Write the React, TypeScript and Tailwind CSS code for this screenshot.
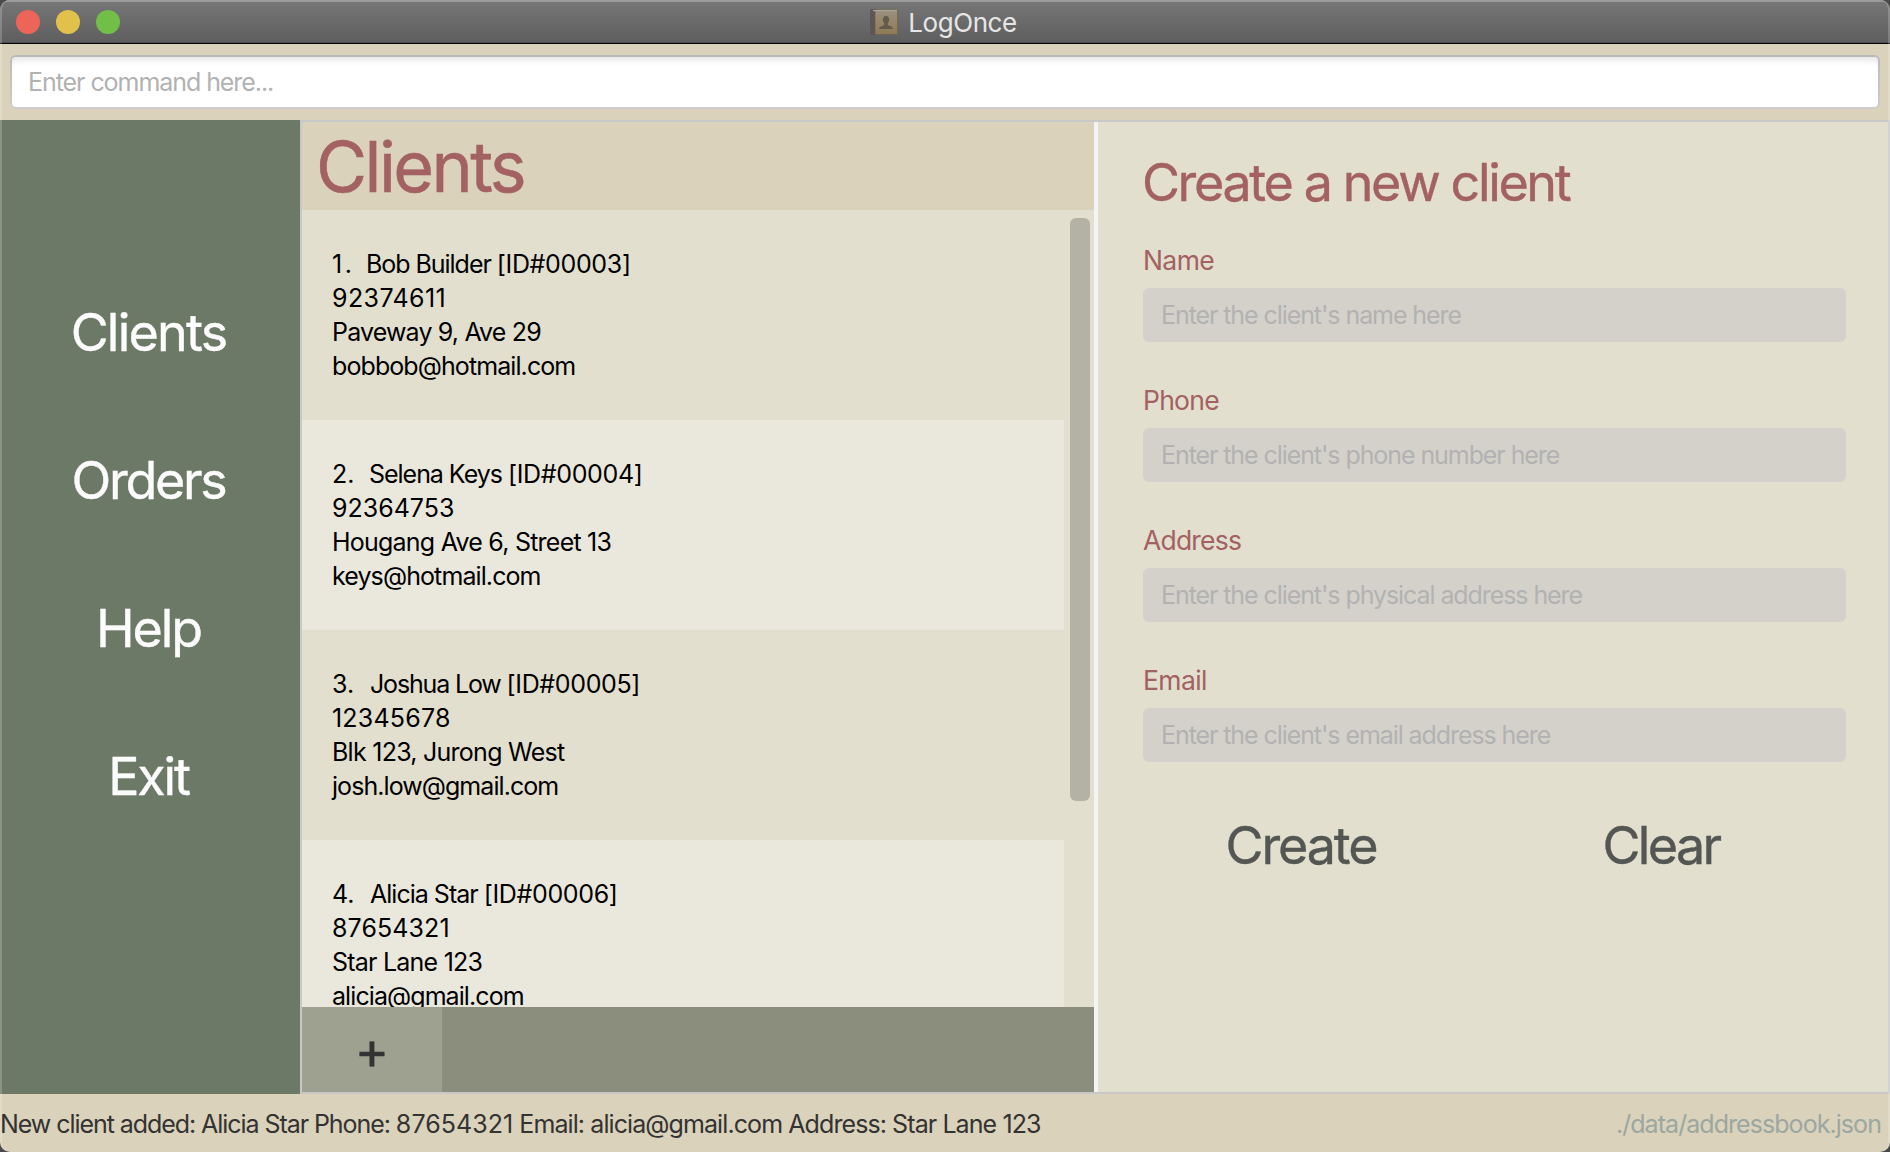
import React from "react";

type Client = {
  no: string;
  noClass: string;
  name: string;
  nameClass: string;
  id: string;
  lines: { text: string; className: string }[];
};

const clients: Client[] = [
  {
    no: "1.",
    noClass: "w-[34px] tracking-[2.5px]",
    name: "Bob Builder ",
    nameClass: "tracking-[-1.04px]",
    id: "[ID#00003]",
    lines: [
      { text: "92374611", className: "tracking-[0.4px]" },
      { text: "Paveway 9, Ave 29", className: "tracking-[-0.84px]" },
      { text: "bobbob@hotmail.com", className: "tracking-[-0.91px]" },
    ],
  },
  {
    no: "2.",
    noClass: "w-[37px]",
    name: "Selena Keys ",
    nameClass: "tracking-[-1.03px]",
    id: "[ID#00004]",
    lines: [
      { text: "92364753", className: "tracking-[0px]" },
      { text: "Hougang Ave 6, Street 13", className: "tracking-[-0.77px]" },
      { text: "keys@hotmail.com", className: "tracking-[-0.9px]" },
    ],
  },
  {
    no: "3.",
    noClass: "w-[38px]",
    name: "Joshua Low ",
    nameClass: "tracking-[-1.16px]",
    id: "[ID#00005]",
    lines: [
      { text: "12345678", className: "tracking-[0.2px]" },
      { text: "Blk 123, Jurong West", className: "tracking-[-0.74px]" },
      { text: "josh.low@gmail.com", className: "tracking-[-0.94px]" },
    ],
  },
  {
    no: "4.",
    noClass: "w-[38px]",
    name: "Alicia Star ",
    nameClass: "tracking-[-0.99px]",
    id: "[ID#00006]",
    lines: [
      { text: "87654321", className: "tracking-[0.1px]" },
      { text: "Star Lane 123", className: "tracking-[-0.77px]" },
      { text: "alicia@gmail.com", className: "tracking-[-0.92px]" },
    ],
  },
];

const nav = [
  { label: "Clients", className: "tracking-[-1.78px]" },
  { label: "Orders", className: "tracking-[-2.3px]" },
  { label: "Help", className: "tracking-[-2.1px]" },
  { label: "Exit", className: "tracking-[-2.2px]" },
];

const fields = [
  { label: "Name", hint: "Enter the client's name here", className: "tracking-[-0.6px]" },
  { label: "Phone", hint: "Enter the client's phone number here", className: "tracking-[-0.75px]" },
  { label: "Address", hint: "Enter the client's physical address here", className: "tracking-[-0.8px]" },
  { label: "Email", hint: "Enter the client's email address here", className: "tracking-[-0.6px]" },
];

function BookIcon() {
  return (
    <svg className="h-[26px] w-7" viewBox="0 0 28 26">
      <defs>
        <linearGradient id="cover" x1="0" y1="0" x2="0" y2="1">
          <stop offset="0" stopColor="#9a9080" />
          <stop offset="1" stopColor="#8f7a55" />
        </linearGradient>
      </defs>
      <rect x="0" y="0" width="7" height="26" rx="1.5" fill="#5d5656" />
      <rect x="5" y="0.5" width="23" height="25" rx="1" fill="#7a6a4c" />
      <rect x="5.5" y="1" width="21.5" height="24" fill="url(#cover)" />
      <rect x="3" y="1" width="24" height="1.2" fill="#aaa398" />
      <path
        d="M16 7c-2 0-3.200 1.500-3.200 3.500 0 1.500.6 2.700 1.400 3.600v1.600c-.8 1.300-5.200 1.500-5.200 4.300h14c0-2.800-4.400-3-5.200-4.300v-1.600c.8-.9 1.400-2.100 1.400-3.600C19.200 8.500 18 7 16 7Z"
        fill="#635a4c"
      />
    </svg>
  );
}

function TitleBar() {
  return (
    <header className="relative flex h-11 shrink-0 items-center justify-center border-b border-black bg-linear-to-b from-[#777777] to-[#5e5e5e] shadow-[inset_0_2px_0_#9b9b9b,inset_0_-1px_0_#505050]">
      <div className="absolute left-4 top-2.5 flex gap-4">
        <span className="size-6 rounded-full bg-[#ed6559]" />
        <span className="size-6 rounded-full bg-[#e1c04c]" />
        <span className="size-6 rounded-full bg-[#72bf47]" />
      </div>
      <div className="mb-px mr-[3px] mt-0.5 flex items-center gap-2.5">
        <BookIcon />
        <span className="pt-0.5 text-[26px] leading-8 tracking-[-0.45px] text-[#e6e6e6]">LogOnce</span>
      </div>
    </header>
  );
}

function Sidebar() {
  return (
    <nav className="flex w-[300px] shrink-0 flex-col items-center bg-[#6d7967] pr-[3px] pt-[139px]">
      {nav.map((n) => (
        <button
          key={n.label}
          className={"text-[52px] leading-[148px] text-[#fcfcfc] [-webkit-text-stroke:0.4px] " + n.className}
        >
          {n.label}
        </button>
      ))}
    </nav>
  );
}

function ClientList() {
  return (
    <section className="flex w-[792px] shrink-0 flex-col">
      <h1 className="h-[88px] shrink-0 bg-[#dad2ba] pl-3.5 pt-px text-[70px] leading-[88px] tracking-[-2.6px] text-[#a36161] [-webkit-text-stroke:0.5px]">
        Clients
      </h1>
      <div className="flex min-h-0 flex-1">
        <ul className="w-[762px] shrink-0 overflow-hidden">
          {clients.map((c) => (
            <li key={c.no} className="h-[210px] pl-[30px] pt-[37px] text-[25px] leading-[34px] text-black even:bg-[#eae8dd]">
              <div className="flex whitespace-pre">
                <span className={"shrink-0 " + c.noClass}>{c.no}</span>
                <span className={c.nameClass}>{c.name}</span>
                <span className="tracking-[-0.35px]">{c.id}</span>
              </div>
              {c.lines.map((line) => (
                <div key={line.text} className={"whitespace-nowrap " + line.className}>
                  {line.text}
                </div>
              ))}
            </li>
          ))}
        </ul>
        <div className="flex-1 pl-1.5 pt-2">
          <div className="h-[583px] w-5 rounded-[6px] bg-[#b4b2a5]" />
        </div>
      </div>
      <div className="flex h-[85px] shrink-0 bg-[#8b8e7d]">
        <button className="flex w-[140px] items-center justify-center bg-[#9ea190] pt-0.5 text-[52px] leading-none text-[#333333] [-webkit-text-stroke:0.4px]">
          +
        </button>
      </div>
    </section>
  );
}

function ClientForm() {
  return (
    <section className="min-w-0 flex-1 pl-[45px] pt-[29px]">
      <h2 className="ml-[-1px] whitespace-nowrap text-[52px] leading-[64px] tracking-[-2.36px] text-[#a36161] [-webkit-text-stroke:0.4px]">
        Create a new client
      </h2>
      <div className="mt-7 flex flex-col gap-[41px]">
        {fields.map((f) => (
          <div key={f.label} className="flex flex-col gap-[11px]">
            <div className={"text-[26.5px] leading-[34px] text-[#a36161] " + f.className}>{f.label}</div>
            <div className="h-[54px] w-[703px] rounded-[6px] bg-[#d4d1ca] pl-[18px] text-[25px] leading-[54px] tracking-[-1.08px] text-[#b2b2b2]">
              {f.hint}
            </div>
          </div>
        ))}
      </div>
      <div className="ml-[-22px] mt-[52px] flex text-[52px] leading-[64px] text-[#535652] [-webkit-text-stroke:0.4px]">
        <button className="w-[360px] tracking-[-2.1px]">Create</button>
        <button className="w-[360px] tracking-[-2.65px]">Clear</button>
      </div>
    </section>
  );
}

export default function App() {
  return (
    <div className="h-[1152px] w-[1890px] bg-[#4a4a4a] font-['Inter',sans-serif]">
      <div className="relative flex h-full flex-col overflow-hidden rounded-[10px] bg-[#dad2ba]">
        <TitleBar />
        <div className="h-[76px] shrink-0 px-2.5 pt-[11px]">
          <div className="h-[54px] rounded-[6px] bg-linear-to-b from-[#b9b9b9] to-[#cdcdcf] p-0.5">
            <div className="h-[50px] rounded-[4px] bg-white pl-4 text-[25px] leading-[50px] tracking-[-1.06px] text-[#b2b2b2] shadow-[inset_0_6px_6px_-3px_#e4e4e4]">
              Enter command here...
            </div>
          </div>
        </div>
        <main className="flex h-[974px] shrink-0">
          <Sidebar />
          <div className="flex min-w-0 flex-1 border-2 border-[#c8c8c8] bg-[#e2dfcf]">
            <ClientList />
            <div className="w-1 shrink-0 bg-[#f4f4f4]" />
            <ClientForm />
          </div>
        </main>
        <footer className="flex flex-1 items-center justify-between whitespace-nowrap pr-[9px] pt-0.5 text-[25px] leading-[34px]">
          <span className="tracking-[-0.91px] text-[#333333]">
            <span className="tracking-[-1.06px]">New client added: Alicia Star Phone: </span>
            <span className="tracking-[0.05px]">87654321</span> Email: alicia@gmail.com Address: Star Lane 123
          </span>
          <span className="tracking-[-0.94px] text-[#9ca7a1]">./data/addressbook.json</span>
        </footer>
        <div className="pointer-events-none absolute inset-0 rounded-[10px] border-x-2 border-white/20" />
      </div>
    </div>
  );
}
